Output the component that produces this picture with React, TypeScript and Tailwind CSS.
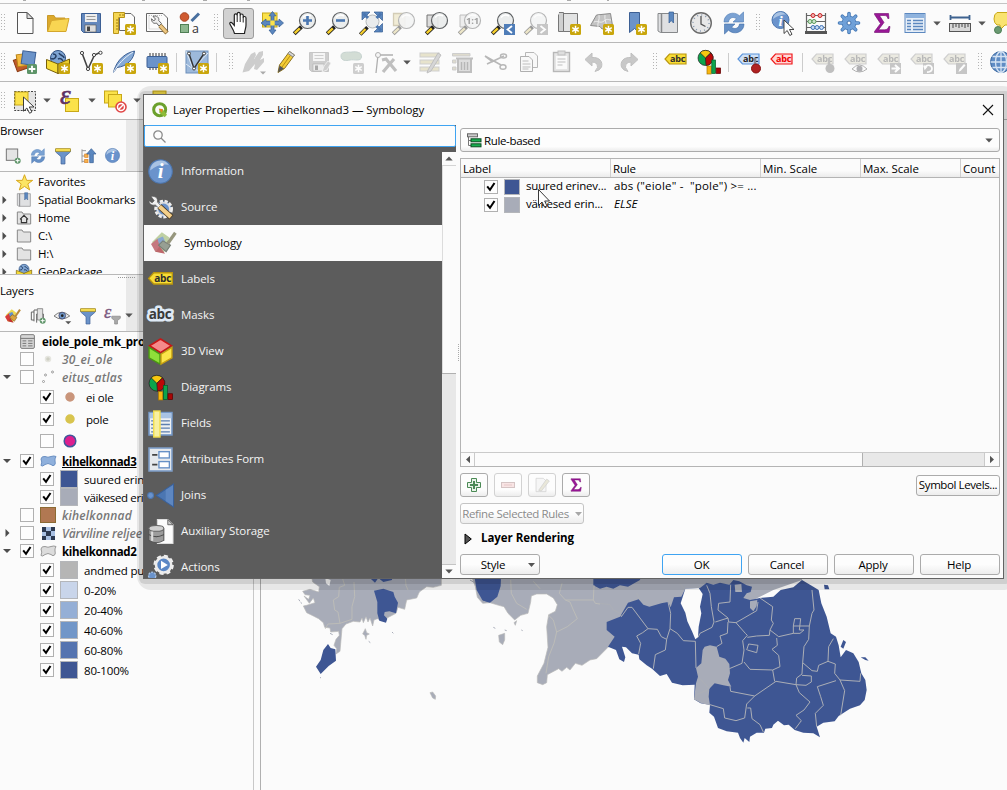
import React from "react";

type Kids = { children?: React.ReactNode };
type IconProps = Kids & { s?: number; dim?: boolean };

const Ic = ({ children, s = 24, dim }: IconProps) => (
  <svg width={s} height={s} viewBox="0 0 24 24" fill="none" className={dim ? "shrink-0 overflow-visible opacity-45 grayscale-[60%]" : "shrink-0 overflow-visible"}>
    {children}
  </svg>
);

const Cell = ({ children, on }: Kids & { on?: boolean }) => (
  <div className={on ? "flex h-[31px] w-[31px] mx-px shrink-0 items-center justify-center rounded-[3px] border border-[#9c9c9c] bg-[#d2d2d2]" : "flex w-[33px] shrink-0 items-center justify-center"}>
    {children}
  </div>
);

const Grip = () => (
  <svg width="6" height="18" viewBox="0 0 6 18" className="shrink-0">
    {[0, 3, 6, 9, 12, 15].map((y) => (
      <g key={y} fill="#b4b4b4">
        <rect x="0" y={y} width="1" height="1" />
        <rect x="3" y={y} width="1" height="1" />
      </g>
    ))}
  </svg>
);

const GripCell = () => (
  <div className="flex w-[16px] shrink-0 items-center justify-center pl-[2px]">
    <Grip />
  </div>
);

const Down = () => (
  <svg width="8" height="5" viewBox="0 0 8 5" className="shrink-0">
    <path d="M.3 .5H7.7L4 4.5Z" fill="#555" />
  </svg>
);

const DownCell = () => (
  <div className="flex w-[12px] shrink-0 items-center justify-center">
    <Down />
  </div>
);

const SepCell = () => (
  <div className="flex w-[7px] shrink-0 justify-center">
    <div className="h-[19px] w-px shrink-0 bg-[#cccccc]" />
  </div>
);

const Star = ({ gray }: { gray?: boolean }) => (
  <g>
    <rect x="13" y="13" width="11" height="11" rx="1.5" fill={gray ? "#999" : "#c9a60c"} />
    <path d="M18.5 14.700v7.600M15.200 16.600l6.600 3.800M21.800 16.600l-6.600 3.800" stroke="#fff" strokeWidth="1.500" />
    <circle cx="18.500" cy="18.500" r="1.800" fill="#fff" />
  </g>
);

const Lens = ({ children }: Kids) => (
  <g>
    <path d="M1.200 22.700L8.500 15.700" stroke="#222" strokeWidth="4" />
    <path d="M1.700 22.200L6.800 17.300" stroke="#f6cf2c" strokeWidth="2.400" />
    <circle cx="14.500" cy="9.500" r="8" fill="#e9ebec" fillOpacity=".92" stroke="#5e6163" strokeWidth="1.200" />
    <path d="M10 6.500A6 6 0 0 1 18 5" stroke="#fff" strokeWidth="1.600" />
    {children}
  </g>
);

const NewFile = () => (
  <Ic><path d="M4.500 1.500H14L20 7.500V22.500H4.500Z" fill="#fcfcfc" stroke="#555" /><path d="M14 1.500V7.500H20Z" fill="#ddd" stroke="#555" /></Ic>
);
const Folder = () => (
  <Ic>
    <path d="M1.500 20V4.500H8L9.500 7H19V20Z" fill="#dca92c" stroke="#c8992a" />
    <path d="M1.500 20.500L5.500 9.500L23 7.500L20 20.500Z" fill="#f8d552" stroke="#d4a62c" />
  </Ic>
);
const Floppy = ({ dim, s }: { dim?: boolean; s?: number }) => (
  <Ic dim={dim} s={s}>
    <path d="M2.500 2.500H21.500V21.500H4.500L2.500 19.500Z" fill={dim ? "#999" : "#6488bd"} stroke={dim ? "#888" : "#3c5f94"} />
    <rect x="6" y="3" width="12" height="8" fill="#eee" />
    <path d="M7.500 5.500h9M7.500 8.500h9" stroke="#999" />
    <rect x="6" y="14" width="11" height="7" fill="#ddd" stroke="#555" strokeWidth=".6" />
    <rect x="8" y="15.500" width="3" height="4.500" fill="#444" />
    {dim && <path d="M15 22L17 16L21 11L24 13L20 20Z" fill="#999" stroke="#eee" strokeWidth=".8" />}
  </Ic>
);
const NewLayout = () => (
  <Ic>
    <path d="M7.500 2.500H19L22.500 6V19.500H7.500Z" fill="#fcfcfc" stroke="#666" />
    <path d="M1.500 1.500H12.500V6.500H6.500V22.500H1.500Z" fill="#f5d653" stroke="#b9951a" />
    <path d="M4 9h2M4 12h2M4 15h2M4 18h2M8 3v2M11 3v2" stroke="#a07f10" />
    <Star />
  </Ic>
);
const LayoutMgr = () => (
  <Ic>
    <path d="M1.500 2.500H18L22.500 7V20.500H1.500Z" fill="#fcfcfc" stroke="#666" /><path d="M4 4.500h13M4 4.500V18h14" stroke="#bbb" strokeDasharray="1 1" />
    <path d="M8 5.500l2.500 2.500-1.700 2L6.500 7.700C6.500 12 9.500 13 11.500 12L14 15l2.500-2.500L13.700 9.500C14.500 6.500 11.500 4 8 5.500Z" fill="#eee" stroke="#666" />
    <path d="M15 14.500L22 22" stroke="#8a6a32" strokeWidth="4.500" /><path d="M15 14.500L21.500 21.500" stroke="#ecc680" strokeWidth="3" />
  </Ic>
);
const StyleMgr = () => (
  <Ic>
    <circle cx="6.500" cy="6" r="4.300" fill="#cf5a30" stroke="#a84422" /><path d="M13.500 10L21 2.500" stroke="#49709f" strokeWidth="3" />
    <rect x="2.500" y="13.500" width="8" height="8" fill="#8db78f" stroke="#4f7f55" />
    <text x="14" y="21.500" fontSize="12.500" fill="#333" fontFamily="Open Sans">a</text>
  </Ic>
);
const Hand = () => (
  <Ic>
    <path d="M7.500 22.500C6.500 18.500 4 15.500 2.800 12.800C2.500 11 4.500 10.800 5.500 12.500L7.300 14.500V4.300C7.300 2.400 10 2.400 10.200 4.300V2.800C10.500 .9 13 .9 13.200 2.800V4.300C13.500 2.500 16 2.600 16.200 4.500V6.500C16.600 5 19 5.200 19 7V14C19 18 17.500 19.500 17.500 22.500Z" fill="#fff" stroke="#222" strokeWidth="1.200" />
    <path d="M10.200 4V11M13.200 4V11M16.200 6V11.500" stroke="#222" />
  </Ic>
);
const PanSel = () => (
  <Ic>
    <rect x="2.500" y="2" width="14.500" height="14" fill="#fbe24a" stroke="#c8a818" />
    <path d="M12.500 .5L16 4.800H14V10H19V8L23.500 12L19 16V14H14V19H16L12.500 23.500L9 19H11V14H6V16L1 12L6 8V10H11V4.800H9Z" fill="#5b87bf" stroke="#345c92" strokeWidth=".7" /><rect x="10.300" y="9.500" width="4.400" height="5" fill="#fbe24a" />
  </Ic>
);
const ZoomIn = () => <Ic><Lens><path d="M14.500 5v9M10 9.500h9" stroke="#4a76b0" strokeWidth="2.600" /></Lens></Ic>;
const ZoomOut = () => <Ic><Lens><path d="M10 9.500h9" stroke="#4a76b0" strokeWidth="2.600" /></Lens></Ic>;
const ZoomFull = () => (
  <Ic>
    <path d="M3 1h8L3 9ZM15 1h8.500v8.500ZM23.500 12.500v8.500H15Z" fill="#5b87bf" stroke="#345c92" strokeWidth=".7" />
    <path d="M1.200 23.500L8.500 16.200" stroke="#222" strokeWidth="3.600" /><path d="M1.500 23.200L6.500 18" stroke="#f6cf2c" strokeWidth="2.200" />
    <circle cx="13.500" cy="10.500" r="6.500" fill="#e9ebec" stroke="#b5b8ba" /><path d="M4.500 2.500l4.500 4.500M22 2.500l-4.500 4.500M22 19.500l-4.500-4.500" stroke="#4a76b0" strokeWidth="3" />
  </Ic>
);
const ZoomSel = () => <Ic dim><path d="M1.500 2.500H13V14.500H1.500Z" fill="#f6df60" stroke="#b9951a" strokeWidth="1.300" /><Lens /></Ic>;
const ZoomLayer = () => <Ic><path d="M2 4H13V16H2Z" fill="#ddd" stroke="#777" /><Lens /></Ic>;
const ZoomNative = () => (
  <Ic dim><path d="M2 4H13V16H2Z" fill="#ddd" stroke="#777" /><Lens><text x="14.500" y="13" fontSize="9.500" fontWeight="700" textAnchor="middle" fill="#333" fontFamily="Open Sans">1:1</text></Lens></Ic>
);
const ZoomLast = () => <Ic><Lens /><rect x="13" y="13" width="11" height="11" fill="#4f7db8" /><path d="M21 15l-4.500 3.500L21 22" stroke="#fff" strokeWidth="1.800" /></Ic>;
const ZoomNext = () => <Ic dim><Lens /><rect x="13" y="13" width="11" height="11" fill="#888" /><path d="M16.500 15l4.500 3.500-4.500 3.500" stroke="#fff" strokeWidth="1.800" /></Ic>;
const MapView = () => (
  <Ic><path d="M4.500 2.500H20.500V20.500H4.500Z" fill="#e2e3e3" stroke="#777" /><path d="M2 1.500H6.500V20.500H1.500V3.500" fill="#cfd0d0" stroke="#777" /><Star /></Ic>
);
const View3D = () => (
  <Ic><path d="M.5 14.500L6.500 4L20.500 2.500L22.500 14.500L12 18L10 15.500Z" fill="#c3c3c3" stroke="#8c8c8c" /><path d="M4 11c4-2 6 2 10-1s4-1 7-1M9 4c1 5-2 8-1 12M15 4c-1 5 2 7 1 12" stroke="#eee" /><Star /></Ic>
);
const Bookmark = () => <Ic><path d="M6.500 1.500H16.500V21.500L11.500 17.500L6.500 21.500Z" fill="#6b93c9" stroke="#3c5f94" /><Star /></Ic>;
const Book = ({ s }: { s?: number }) => (
  <Ic s={s}><path d="M2 2.500H21.500V21.500H4.500L2 20Z" fill="#dfe0e2" stroke="#86888a" /><path d="M5.500 2.500v19" stroke="#86888a" strokeWidth="1.500" /><path d="M13 1H17.500V12L15.200 9.500L13 12Z" fill="#5b87bf" stroke="#345c92" strokeWidth=".7" /></Ic>
);
const Clock = () => (
  <Ic><circle cx="12" cy="12" r="10.300" fill="#e8e8e8" stroke="#6b6b6b" strokeWidth="1.400" /><circle cx="12" cy="12" r="8" stroke="#8a9bb0" strokeWidth="1.500" strokeDasharray="1 3.190" /><path d="M12 5v8l4.500 2.500" stroke="#555" strokeWidth="1.300" /></Ic>
);
const Refresh = ({ s }: { s?: number }) => (
  <Ic s={s}><path d="M2 11C2 2.500 12 -.5 17.500 4.800L21.500 1V11H11L14.500 7.800C11 5 7 7 6.500 11Z" fill="#7ba2d3" stroke="#4a78b4" strokeWidth=".6" /><path d="M22 13C22 21.500 12 24.500 6.500 19.200L2.500 23V13H13L9.500 16.200C13 19 17 17 17.500 13Z" fill="#6690c6" stroke="#3d6ba8" strokeWidth=".6" /></Ic>
);
const Cursor = ({ x, y, k = 1 }: { x: number; y: number; k?: number }) => (
  <path transform={`translate(${x} ${y}) scale(${k})`} d="M0 0V13.500L3.200 10.500L5.800 15.500L8 14.300L5.500 9.500H10Z" fill="#fff" stroke="#333" strokeWidth=".9" />
);
const Info = ({ s, cursor }: { s?: number; cursor?: boolean }) => (
  <Ic s={s}>
    <circle cx={cursor ? 9.5 : 12} cy={cursor ? 9 : 12} r={cursor ? 8.5 : 11.3} fill="#6a93cc" stroke="#4d77b0" />
    <path d={cursor ? "M2 8A7.500 7.500 0 0 1 15 3.500Q9 3 2 8" : "M2 11A10 10 0 0 1 20 5.500Q10 4 2 11"} fill="#a9c3e3" />
    <text x={cursor ? 9.5 : 12} y={cursor ? 14.5 : 18.5} textAnchor="middle" fontSize={cursor ? 15 : 20} fontWeight="700" fontStyle="italic" fill="#fff" fontFamily="Liberation Serif">i</text>
    {cursor && <Cursor x={13} y={9} k={1} />}
  </Ic>
);
const Abacus = () => (
  <Ic>
    <path d="M2.500 2V21M21.500 2V21M2.500 4.500H21.500M2.500 10.500H21.500M2.500 16.500H21.500" stroke="#666" strokeWidth="1.200" /><path d="M1 21.500H23" stroke="#555" strokeWidth="3" />
    {[9, 16].map((x) => <circle key={x} cx={x} cy="4.500" r="2" fill="#f0b0b0" stroke="#c22" />)}
    {[6, 10].map((x) => <circle key={x} cx={x} cy="10.500" r="2" fill="#cfe6cf" stroke="#5a9a5a" />)}
    {[9, 13, 17.500].map((x) => <circle key={x} cx={x} cy="16.500" r="2" fill="#c8dcf4" stroke="#3f72b5" />)}
  </Ic>
);
const Gear = () => (
  <Ic>
    <g stroke="#4a7cb8" strokeWidth="3.600" strokeLinecap="round">{[0, 45, 90, 135].map((a) => <path key={a} d="M12 2.500V21.500" transform={`rotate(${a} 12 12)`} />)}</g>
    <circle cx="12" cy="12" r="7" fill="#6fa0d8" stroke="#4a7cb8" />
    <g stroke="#6fa0d8" strokeWidth="2" strokeLinecap="round">{[0, 45, 90, 135].map((a) => <path key={a} d="M12 2.700V21.300" transform={`rotate(${a} 12 12)`} />)}</g>
    <circle cx="12" cy="12" r="2" fill="#fff" stroke="#3f6fab" />
  </Ic>
);
const Sigma = ({ s }: { s?: number }) => (
  <Ic s={s}><path d="M4.500 2.500H18.500L19 7.500H17.800C17.500 5 16 4.500 14 4.500H9.500L14 11.500L8.500 18.800H14.500C17 18.800 18.200 17.500 18.800 15.500H20L19 21.500H4.500V20.500L10.500 12.500L4.500 3.500Z" fill="#9a1797" stroke="#6d0b6d" strokeWidth=".6" /></Ic>
);
const Table = () => (
  <Ic><rect x="2" y="2.500" width="20" height="19" fill="#e7eff8" stroke="#5c88bf" /><rect x="2.500" y="3" width="19" height="4" fill="#8fb3de" /><path d="M4 9.500h4M10 9.500h10M4 12.500h4M10 12.500h10M4 15.500h4M10 15.500h10M4 18.500h4M10 18.500h10" stroke="#5c88bf" strokeWidth="1.400" /></Ic>
);
const Ruler = () => (
  <Ic><path d="M2.500 6.500H21.500M2.500 4v5M21.500 4v5" stroke="#3e6390" strokeWidth="1.800" /><rect x="1.500" y="12.500" width="21" height="8" fill="#d8d8d8" stroke="#555" /><path d="M5 13v4M8 13v3M11 13v4M14 13v3M17 13v4M20 13v3" stroke="#444" /></Ic>
);
const Tip = () => (
  <Ic><path d="M4 1.500H22V14H12L7 19V14H4Q1 12 1 8Q1 3 4 1.500Z" fill="#f9e370" stroke="#c8a818" /><circle cx="5" cy="19" r="3.500" fill="#6a9a72" stroke="#4f7f55" /></Ic>
);

const DataSource = () => (
  <Ic><rect x="2" y="8" width="12" height="12" transform="rotate(-20 8 14)" fill="#bf5a2a" stroke="#8c3d16" /><rect x="4" y="4" width="12" height="12" transform="rotate(-8 10 10)" fill="#f4b93f" stroke="#b98415" /><rect x="9" y="1.500" width="13" height="13" transform="rotate(8 15 8)" fill="#6b93c9" stroke="#3c5f94" /><rect x="14" y="14" width="10" height="10" rx="1.500" fill="#5d9468" /><path d="M19 15.700v6.600M15.700 19h6.600" stroke="#fff" strokeWidth="1.800" /></Ic>
);
const GeoPkg = ({ s, plain }: { s?: number; plain?: boolean }) => (
  <Ic s={s}>
    <circle cx="12" cy="8" r="7.500" fill="#7ea4d2" stroke="#2f4f7f" /><path d="M7 4c3 0 4 2 2 4s-3 0-4 1M13 3c1 3 5 2 5 5M12 9c2-1 4 0 5 2" stroke="#263f63" strokeWidth="1.500" />
    <path d="M.5 9.500L12 14V23.500L.5 18.500Z" fill="#f6dc38" stroke="#775f08" /><path d="M23.500 9L12 14V23.500L23.500 18.500Z" fill="#e9cb2c" stroke="#775f08" />
    {!plain && <Star />}
  </Ic>
);
const VNew = () => (
  <Ic><path d="M3 3L9 19L15.500 5L21 2.500" stroke="#444" strokeWidth="1.600" /><g fill="#fff" stroke="#444"><circle cx="3" cy="3" r="1.600" /><circle cx="9" cy="19" r="1.600" /><circle cx="15" cy="5" r="1.600" /><circle cx="21.500" cy="2.800" r="1.600" /></g><Star /></Ic>
);
const Feather = () => (
  <Ic><path d="M1.500 22.500C3 15 9 4 22.500 1C22 9 15 16.500 5 17.500Z" fill="#86aad6" stroke="#3c5f94" /><path d="M1.500 22.500C6 14 12 8 21 2" stroke="#e8f0fa" /><Star /></Ic>
);
const Chip = () => (
  <Ic><path d="M5 3v17M8 3v17M11 3v17M14 3v17M17 3v17M20 3v17" stroke="#555" strokeWidth="1.200" /><rect x="2" y="6.500" width="20" height="11" rx="1" fill="#6b93c9" stroke="#3c5f94" /><Star /></Ic>
);
const VMesh = () => (
  <Ic><rect x="1" y="1" width="22" height="22" fill="#9db9db" stroke="#6d8fbb" /><path d="M1 1L8 19L23 3M8 19L23 23M1 14L8 19" stroke="#dde8f4" strokeWidth="1" /><path d="M4 3.500L9 18.500L19 3.500" stroke="#333" strokeWidth="1.400" /><g fill="#fff" stroke="#444"><circle cx="4" cy="3.500" r="1.500" /><circle cx="9" cy="18.500" r="1.500" /><circle cx="19" cy="3.500" r="1.500" /></g><Star /></Ic>
);
const Edits = () => (
  <Ic><path d="M1.500 22.500L4 14L10 4L14 2L15 5L13 9L18 2L22 1V5L19 10L23 8V12L16 20L13 19L14 14L8 21Z" fill="#cdcdcd" /><path d="M19 21.500H25L22 24.500Z" fill="#aaa" /></Ic>
);
const Pencil = () => (
  <Ic><path d="M4 22.500L5.500 15L15.500 1.500L20.500 5L10.500 18.500Z" fill="#f4cc35" stroke="#8f7421" /><path d="M8 17L18 3.200" stroke="#b78f12" /><path d="M14 3.500L15.500 1.500L20.500 5L19 7Z" fill="#d8d8d8" stroke="#888" /><path d="M4 22.500L5.500 15.500L10 18.500Z" fill="#555" /></Ic>
);
const AddFeat = () => <Ic dim><path d="M1 6C1 1 8 2.500 12 2S22 2 21.500 7S14 9 10 10S1 11 1 6Z" fill="#8cc29a" stroke="#6a9" /><Star gray /></Ic>;
const Vertex = () => (
  <Ic dim><path d="M3 23L5 5H20" stroke="#555" strokeWidth="1.300" /><circle cx="5" cy="5" r="2.500" fill="#eee" stroke="#555" /><path d="M9 10l4-1 10 12M21 9L10 22" stroke="#777" strokeWidth="3.200" /></Ic>
);
const EditAttr = () => <Ic dim><g fill="#e3c94c" stroke="#999"><rect x="2" y="3" width="19" height="4" /><rect x="2" y="10" width="19" height="4" /><rect x="2" y="17" width="19" height="4" /></g><path d="M10 20L20 3L23 5L13 21L9 23Z" fill="#aaa" stroke="#777" /></Ic>;
const Trash = () => <Ic dim><path d="M1.500 3.500H19V6H1.500ZM1.500 10H5V13H1.500ZM1.500 17H5V20H1.500Z" fill="#c9b76a" stroke="#999" /><path d="M5 8.500H22M7 9V22H20V9" fill="#bbb" stroke="#777" strokeWidth="2" /><path d="M10.500 12v8M13.500 12v8M16.500 12v8" stroke="#666" strokeWidth="1.400" /></Ic>;
const Cut = () => <Ic dim><path d="M1 6L17 15M3 14L20 6M1 6L9 12" stroke="#666" strokeWidth="1.600" /><ellipse cx="19" cy="17" rx="3" ry="2.300" stroke="#666" strokeWidth="1.500" /><ellipse cx="19.500" cy="6" rx="3" ry="2" stroke="#666" strokeWidth="1.500" /></Ic>;
const Copy = () => <Ic dim><path d="M8.500 2.500H17L20.500 6V17.500H8.500Z" fill="#f6f6f6" stroke="#666" /><path d="M3.500 6.500H12L15.500 10V21.500H3.500Z" fill="#f6f6f6" stroke="#555" /><path d="M5.500 11h6M5.500 14h8M5.500 17h8M5.500 19h6" stroke="#777" /></Ic>;
const Paste = () => <Ic dim><rect x="3.500" y="2.500" width="16" height="19" fill="#ccc" stroke="#666" strokeWidth="1.400" /><rect x="6" y="6" width="11" height="13" fill="#fafafa" /><rect x="8" y="1" width="7" height="4" fill="#bbb" stroke="#777" /><path d="M7.500 9h8M7.500 12h8M7.500 15h5" stroke="#777" /></Ic>;
const Undo = () => <Ic dim><path d="M2 9.500L9 3V7.500C17 7 20 12 18.500 17Q17 20.500 12 21.500Q16 17 14 14Q12 12 9 12V16Z" fill="#8c8c8c" stroke="#777" /></Ic>;
const Redo = () => <Ic dim><path d="M22 9.500L15 3V7.500C7 7 4 12 5.500 17Q7 20.500 12 21.500Q8 17 10 14Q12 12 15 12V16Z" fill="#8c8c8c" stroke="#777" /></Ic>;

const Tag = ({ fill, stroke, ink, label = "abc" }: { fill: string; stroke: string; ink: string; label?: string }) => (
  <g><path d="M6 5.500H22.500V15.500H6L1.500 10.500Z" fill={fill} stroke={stroke} strokeWidth="1.200" /><text x="14" y="13.700" textAnchor="middle" fontSize="9" fontWeight="700" fill={ink} fontFamily="Open Sans" letterSpacing="-.2">{label}</text></g>
);
const LabelY = () => <Ic><g transform="translate(-.5 -1.500)"><Tag fill="#f8dd35" stroke="#b9960f" ink="#2d2d2d" /></g></Ic>;
const LabelNav = () => <Ic s={27}><g transform="translate(0 .5)"><Tag fill="#f8dd35" stroke="#b9960f" ink="#2d2d2d" /></g></Ic>;
const Diagram = ({ s }: { s?: number }) => (
  <Ic s={s}>
    <circle cx="8.500" cy="8" r="7.500" fill="#0da44c" stroke="#222" strokeWidth=".7" /><path d="M8.500 8L3 2.700A7.500 7.500 0 0 1 14 2.700Z" fill="#f9c80f" stroke="#222" strokeWidth=".7" /><path d="M8.500 8L14 2.700A7.500 7.500 0 0 1 9 15.500Z" fill="#bb0808" stroke="#222" strokeWidth=".7" />
    <rect x="10" y="16" width="4.200" height="8" fill="#f9b60f" stroke="#a87805" strokeWidth=".7" /><rect x="14.800" y="10" width="3.800" height="13.500" fill="#0da44c" stroke="#065c29" strokeWidth=".7" /><rect x="19.200" y="18" width="4.400" height="5.500" fill="#a80606" stroke="#5d0202" strokeWidth=".7" />
  </Ic>
);
const LabelPin = () => <Ic><g transform="translate(-.5 -1.500)"><Tag fill="#cfe1f7" stroke="#5b94da" ink="#222" /></g><path d="M18 8v8" stroke="#889" strokeWidth="2.500" /><circle cx="19" cy="18.500" r="4.500" fill="#b02121" stroke="#811" /></Ic>;
const LabelRed = () => <Ic><g transform="translate(-.5 -1.500)"><Tag fill="#ffd6d6" stroke="#f01818" ink="#e00" /></g></Ic>;
const LabelDim = ({ k }: { k: number }) => (
  <Ic dim>
    <g transform="translate(-.5 -1.500)"><Tag fill="#ddd7a8" stroke="#999" ink="#666" /></g>
    {k === 0 && <g><path d="M18 8v8" stroke="#777" strokeWidth="2.500" /><circle cx="19" cy="18.500" r="4.500" fill="#777" /></g>}
    {k === 1 && <g><path d="M8 19Q15.500 11 23 19Q15.500 25 8 19Z" fill="#fff" stroke="#555" /><circle cx="15.500" cy="18.700" r="3" fill="#556" /></g>}
    {k > 1 && <rect x="13" y="13" width="11" height="11" fill="#888" />}
    {k === 2 && <path d="M14.500 18.500H21M18 15l4 3.500-4 3.500" stroke="#fff" strokeWidth="2" />}
    {k === 3 && <path d="M15 18c0-4 7-3.500 7 .5S17 22 17 22M17 16l-2 2.500-1-3" stroke="#fff" strokeWidth="1.700" />}
    {k === 4 && <path d="M15.500 22l1-3 4.500-5 1.500 1.500-4.500 5Z" fill="#fff" />}
  </Ic>
);
const Globe = () => <Ic><circle cx="12" cy="12" r="10.500" fill="#5f8cc4" stroke="#3a679f" /><path d="M12 1.500v21M1.500 12h21M3.500 6.500h17M3.500 17.500h17" stroke="#d5e3f3" strokeWidth="1.300" /><ellipse cx="12" cy="12" rx="5.500" ry="10.500" stroke="#d5e3f3" strokeWidth="1.300" /></Ic>;

const SelectIc = () => <Ic><rect x="1.500" y="2.500" width="21" height="19" stroke="#444" fill="#e4e4e4" strokeDasharray="2 1.300" /><rect x="2" y="3" width="13" height="13" fill="#fbe24a" stroke="#c8a818" /><g transform="translate(10.500 8)"><Cursor x={0} y={0} k={1.05} /></g></Ic>;
const SelExpr = () => <Ic><rect x="7.500" y="9.500" width="13" height="13" fill="#fbe24a" stroke="#c8a818" /><text x="2" y="14.500" fontSize="27" fontStyle="italic" fill="#5e3163" stroke="#5e3163" strokeWidth=".6" fontFamily="Liberation Serif">ε</text></Ic>;
const Desel = () => <Ic><rect x="1.500" y="2" width="13" height="12" fill="#fbe24a" stroke="#c8a818" /><rect x="5.500" y="5.500" width="13" height="12.500" fill="#fbe24a" stroke="#c8a818" /><circle cx="18" cy="18" r="5.800" fill="#e04444" /><circle cx="18" cy="18" r="3.500" stroke="#fff" strokeWidth="1.500" /><path d="M15.500 20.500l5-5" stroke="#fff" strokeWidth="1.500" /></Ic>;

const AddLayer = () => <Ic s={16}><rect x="2" y="1.500" width="17" height="17" fill="#e4e4e4" stroke="#777" strokeWidth="1.500" /><circle cx="19" cy="19" r="4.500" fill="#5d9468" /><path d="M19 16v6M16 19h6" stroke="#fff" strokeWidth="1.500" /></Ic>;
const Filter = () => <Ic s={16}><path d="M1 2H23V6L15 13V24H9V13L1 6Z" fill="#6b93c9" stroke="#3c5f94" /><rect x="1" y="1" width="22" height="4" fill="#f2da50" stroke="#a98d18" /></Ic>;
const Collapse = () => <Ic s={16}><path d="M3 2v20M3 4h6M3 12h4M3 20h4" stroke="#999" strokeWidth="1.500" /><rect x="7" y="9" width="5" height="5" fill="#f7b24c" stroke="#d9822b" /><rect x="7" y="17" width="5" height="5" fill="#f7b24c" stroke="#d9822b" /><path d="M17 1L24 9H20V22H14.500V9H10Z" fill="#5b87bf" stroke="#345c92" /></Ic>;
const Brush = ({ s = 16, dim }: { s?: number; dim?: boolean }) => (
  <svg width={s} height={s} viewBox="0 0 24 24" className={dim ? "shrink-0 opacity-90" : "shrink-0"}>
    <path d="M1 11L10 2L17 7L12 21L4 20Z" fill={dim ? "#b9cc9a" : "#ecd850"} />
    <path d="M0 13L6 8L9 15L4 20Z" fill={dim ? "#c06a72" : "#d83c3c"} />
    <path d="M6 8L11 6L14 13L8 15Z" fill={dim ? "#7d9fcb" : "#5e8fd0"} />
    <path d="M4 20L8 15L13 22Z" fill={dim ? "#b8565c" : "#c03030"} />
    <path d="M7 14L11 10L18 14L14 20Z" fill={dim ? "#8d9688" : "#d9a23c"} stroke={dim ? "#6a7268" : "#8b6a2c"} />
    <path d="M15.500 12.500L22.500 2.500" stroke={dim ? "#8c8c70" : "#b98a3a"} strokeWidth="3" />
  </svg>
);
const AddGroup = () => <Ic s={16}><path d="M6 18H2V6H6M6 20V3H12M10 22V9H20V18" stroke="#666" strokeWidth="1.500" /><path d="M11 1v17h8V1Z" fill="#e0e0e0" stroke="#666" /><circle cx="19" cy="19" r="4.500" fill="#5d9468" /><path d="M19 16v6M16 19h6" stroke="#fff" strokeWidth="1.500" /></Ic>;
const Eye = () => <Ic s={18}><path d="M0 12Q10 2 21 12Q10 20 0 12Z" fill="#f0f0f0" stroke="#777" strokeWidth="1.300" /><circle cx="11" cy="11.500" r="4.500" fill="#6f97c8" stroke="#446" /><circle cx="11" cy="11.500" r="1.800" fill="#222" /><path d="M15 19h8l-4 4Z" fill="#555" /></Ic>;
const EpsF = () => <Ic s={17}><text x="0" y="15" fontSize="26" fontStyle="italic" fill="#7c5980" stroke="#7c5980" strokeWidth=".5" fontFamily="Liberation Serif">ε</text><path d="M11 13H23V16L19 19V24H15V19L11 16Z" fill="#aaa" stroke="#888" /></Ic>;

const Check = ({ on = true }: { on?: boolean }) => (
  <svg width="14" height="14" viewBox="0 0 14 14" className="shrink-0">
    <rect x=".5" y=".5" width="13" height="13" fill="#fdfdfd" stroke="#b0b0b0" />
    {on && <path d="M3.200 6.300L6 9.800L10.500 3" stroke="#000" strokeWidth="2" fill="none" />}
  </svg>
);
const Tri = ({ open }: { open?: boolean }) => (
  <svg width="8" height="8" viewBox="0 0 8 8" className="shrink-0">
    <path d={open ? "M0 2H8L4 6Z" : "M2.500 0V8L6.500 4Z"} fill="#4d4d4d" />
  </svg>
);

const FolderG = ({ home }: { home?: boolean }) => (
  <Ic s={16}><path d="M2 21V3H9L11 6H22V21Z" fill="#e3e3e3" stroke="#888" strokeWidth="1.500" />{home && <path d="M6 14L12 8L18 14M8 13V19H16V13" stroke="#333" strokeWidth="1.700" />}</Ic>
);

const browserRows: [string, React.ReactNode, boolean][] = [
  ["Favorites", <Ic s={17}><path d="M12 1L15 9H23.500L16.700 14L19.300 22.500L12 17.500L4.700 22.500L7.300 14L.5 9H9Z" fill="#fbe564" stroke="#d8a81c" strokeWidth="1.400" /></Ic>, false],
  ["Spatial Bookmarks", <Book s={16} />, true],
  ["Home", <FolderG home />, true],
  ["C:\\", <FolderG />, true],
  ["H:\\", <FolderG />, true],
  ["GeoPackage", <GeoPkg s={16} plain />, true],
];

const Swatch = ({ c }: { c: string }) => (
  <svg width="18" height="18" className="shrink-0"><rect x=".5" y=".5" width="17" height="17" fill={c} stroke="#b4b6ba" /></svg>
);

const Poly = ({ c, k }: { c: string; k: string }) => (
  <svg width="17" height="13" viewBox="0 0 17 13" className="shrink-0"><path d="M1 4Q1.500 1 5 1.500Q8 3 11 1.500Q14 .5 16 1.500Q14.500 4 15 6T15 9.500Q13 12 11 9.500Q8 7.500 5 9.500Q2.500 12 1 10.500Q2.500 7 1 4Z" fill={c} stroke={k} /></svg>
);

const Group = ({ open, checked, icon, label, cls, has = true }: { open?: boolean; checked: boolean; icon: React.ReactNode; label: string; cls: string; has?: boolean }) => (
  <div className="flex h-[18px] shrink-0 items-center pl-[3px]">
    <div className="w-[17px] shrink-0">{has && <Tri open={open} />}</div>
    <Check on={checked} />
    <div className="flex w-[28px] shrink-0 items-center justify-center">{icon}</div>
    <span className={"whitespace-nowrap pt-px " + cls}>{label}</span>
  </div>
);

const dimName = "font-semibold italic text-[12px] text-[#777] tracking-[0.2px]";
const boldName = "font-bold tracking-[-0.35px]";

const Dot = ({ c, k, r }: { c: string; k: string; r: number }) => (
  <svg width="16" height="16" className="shrink-0"><circle cx="8" cy="8" r={r} fill={c} stroke={k} strokeWidth="1.500" /></svg>
);

const classes: [string, string][] = [
  ["andmed pu", "#b5b5b5"], ["0-20%", "#c9d5ea"], ["20-40%", "#95afd6"], ["40-60%", "#7196c8"], ["60-80%", "#5574b0"], ["80-100%", "#3e5693"],
];

const LayerTree = () => (
  <div className="flex w-[150px] flex-1 flex-col">
    <div className="flex h-[18px] items-center pl-[20px]">
      <Ic s={15}><rect x="1" y="1" width="22" height="22" rx="2" fill="#d6d6d6" stroke="#777" strokeWidth="1.500" /><path d="M1 7h22M4 11h6M13 11h7M4 15h6M13 15h7M4 19h6M13 19h7" stroke="#777" strokeWidth="1.600" /></Ic>
      <span className="ml-[7px] pt-[2px] font-bold tracking-[-0.1px]">eiole_pole_mk_pro</span>
    </div>
    <Group has={false} checked={false} icon={<Dot c="#cfd0c4" k="#e6e6e0" r={2.500} />} label="30_ei_ole" cls={dimName} />
    <Group open checked={false} icon={<svg width="14" height="14" fill="#fff" stroke="#999"><circle cx="2.500" cy="11.500" r="1" /><circle cx="4.500" cy="5" r="1" /><circle cx="11.500" cy="2" r="1" /></svg>} label="eitus_atlas" cls={dimName} />
    <div className="flex h-[22px] items-center pl-[40px]"><Check /><div className="ml-[8px] mr-[8px]"><Dot c="#c9957b" k="#c9957b" r={4} /></div><span className="pt-px">ei ole</span></div>
    <div className="flex h-[22px] items-center pl-[40px]"><Check /><div className="ml-[8px] mr-[8px]"><Dot c="#d8c44e" k="#d8c44e" r={4} /></div><span className="pt-px">pole</span></div>
    <div className="flex h-[22px] items-center pl-[40px]"><Check on={false} /><div className="ml-[8px]"><Dot c="#dd1f8f" k="#41569a" r={5.800} /></div></div>
    <Group open checked icon={<Poly c="#8fb0dc" k="#6a8fc2" />} label="kihelkonnad3" cls="font-bold tracking-[-0.35px] underline" />
    <div className="flex h-[18px] items-center pl-[40px]"><Check /><div className="ml-[6px] mr-[6px]"><Swatch c="#3e5693" /></div><span className="whitespace-nowrap pt-px">suured erin</span></div>
    <div className="flex h-[18px] items-center pl-[40px]"><Check /><div className="ml-[6px] mr-[6px]"><Swatch c="#a8acb8" /></div><span className="whitespace-nowrap pt-px tracking-[-0.35px]">väikesed eri</span></div>
    <Group has={false} checked={false} icon={<svg width="16" height="16"><rect x=".5" y=".5" width="15" height="15" fill="#b17852" stroke="#8c6a33" /></svg>} label="kihelkonnad" cls={dimName} />
    <Group checked={false} icon={<svg width="13" height="13"><rect width="13" height="13" fill="#a9c1e4" /><path d="M0 0h4v5H0ZM9 0h4v4H9ZM4 4h5v5H4ZM0 9h4v4H0ZM9 9h4v4H9Z" fill="#2c3a52" /></svg>} label="Värviline reljee" cls="font-semibold italic text-[12px] text-[#777] tracking-[-0.1px]" />
    <Group open checked icon={<Poly c="#dcdcdc" k="#999" />} label="kihelkonnad2" cls={boldName} />
    {classes.map(([t, c]) => (
      <div key={t} className="flex h-[20px] items-center pl-[40px]"><Check /><div className="ml-[6px] mr-[6px]"><Swatch c={c} /></div><span className="whitespace-nowrap pt-px">{t}</span></div>
    ))}
  </div>
);

const MapCanvas = () => (
  <svg width="746" height="230" viewBox="261 560 746 230" className="block">
    <g transform="translate(260 570) scale(.33333)">
      <g fill="#a8acb8" stroke="#b9b9b8" strokeWidth="2">
        <path d="M150 0L158 36L178 50L176 66L150 58L128 64L135 74L150 76L146 88L132 78L148 100L160 84L165 98L140 106L130 108L140 128L160 138L176 146L190 158L194 172L210 174L212 186L236 184L238 196L228 208L222 226L230 236L228 252L240 244L246 176L258 162L280 154L300 156L306 144L310 158L318 140L324 156L330 144L338 168L342 150L352 146L366 152L408 130L414 112L434 118L440 90L470 84L478 66L500 50L520 52L544 46V0Z" />
        <path d="M308 192L316 176L320 188L328 192L320 196L318 208L314 196ZM716 196L734 190L734 210L728 224L718 216ZM762 158L770 152L766 166ZM510 368L518 366L527 378L526 388L518 384Z" />
        <path d="M628 0L646 50L652 82L668 100L690 98L716 106L732 110L744 130L764 150L782 136L804 130L812 96L814 78L830 72L860 72L880 84L892 104L886 124L866 134L860 170L864 232L852 280L832 318L832 338L848 344L860 338L862 314L896 296L906 304L920 292L930 300L946 280L966 286L990 270L1010 266L1044 232L1100 200L1140 180V0Z" />
      </g>
      <path d="M196 24L198 40L208 48L212 30ZM812 78L814 130" fill="#fbfbfb" />
      <g fill="#3e5693">
        <path d="M342 62L370 56L400 66L404 80L414 98L408 130L388 124L374 126L372 136L382 146L378 158L358 152L352 130L352 96ZM204 222L212 234L226 238L228 272L206 288L182 312L168 290L182 270L190 240ZM640 0H724L722 48L712 80L690 98L668 92L650 60ZM330 0H400L396 30L370 36L355 24L345 38L332 26Z" />
        <path d="M1000 0H1140V56L1110 54L1090 50L1070 58L1040 52L1020 56L1000 46Z" />
      </g>
      <g fill="none" stroke="#bcbcb8" strokeWidth="3">
        <path d="M246 20L254 46L238 52L236 80L220 90L224 120L234 126L240 160L276 148L276 110L284 80L282 36M240 160L204 162L196 176M436 24L438 46L444 60M752 30L754 70L770 100L800 118M820 34L840 56M906 40L898 70L916 90L930 96L940 120L952 146L922 170L890 186L882 220L866 260L858 310M916 90L1000 90L1002 46M1000 90L1006 100L1060 108L1082 136M866 136L880 150L890 186" />
      </g>
      <path d="M116 88l4 6M122 98l4 2M210 190l8 4M326 214l5 4M396 186l4 4M700 172l6 3M734 180l6 2M784 180l4 2M630 30l14 8M664 92l12 4M500 36l40 6M180 322l3 2" stroke="#a8acb8" strokeWidth="3" />
    </g>
    <g transform="translate(600 570) scale(.33333)">
      <path d="M0 0H610L606 30L520 60L460 90L330 100L250 110L60 140L20 190L0 250Z" fill="#a8acb8" />
      <path d="M128 0L120 30L84 50L60 46L40 56L20 50L0 56V0Z" fill="#3e5693" />
      <path d="M84 98L116 88L130 104L148 110L184 100L204 96L212 112L222 82L244 80L256 56L300 54L320 38L340 44L360 38L388 44L400 30L418 34L440 46L456 50L452 66L440 70L430 84L450 90L480 84L520 80L542 60L580 52L606 30L640 50L656 60L664 100L680 140L692 190L708 200L716 226L722 262L738 240L760 250L776 276L784 310L796 330L800 360L794 390L780 406L750 416L716 438L704 454L670 458L650 470L660 502L640 490L610 488L584 480L566 464L552 466L534 452L520 464L516 474L496 476L492 488L470 488L450 500L448 516L434 504L430 518L420 504L414 488L380 484L354 474L342 440L328 428L330 404L302 400L282 388L284 344L248 346L216 338L200 312L180 318L156 296L140 286L118 268L116 254L96 250L78 232L66 230L76 262L72 276L58 268L48 240L24 230L44 200L20 180L20 156L60 140ZM672 44L684 46L688 58L674 58ZM730 210L738 216L730 236L722 230ZM782 262L796 262L806 272L796 270ZM762 238l6 3ZM816 286l4 4Z" fill="#3e5693" />
      <path d="M308 240L314 230L330 226L350 230L358 260L376 266L388 282L390 310L384 330L394 350L370 346L344 340L328 356L326 380L330 406L304 400L282 388L288 340L294 320L288 294L304 280ZM450 94L472 90L470 108L460 124L450 114ZM404 44L424 42L426 66L406 66Z" fill="#a8acb8" />
      <path d="M256 56L296 54L308 72L300 110L304 130L296 170L294 202L286 208L276 184L262 154L256 128L242 100Z" fill="#fbfbfb" />
      <g fill="none" stroke="#acafb6" strokeWidth="3">
        <path d="M0 100L30 104L40 120L60 130L64 140L84 112L96 112L144 176L128 188L110 198L122 220L116 252M144 176L172 178L184 200L200 208L196 240L166 254L160 296M204 96L212 130L210 176L232 190L250 212L286 214L288 294M210 176L200 208M320 46L330 70L334 110L342 156L336 172L300 190L294 202M392 44L390 96L356 100L354 120L384 144L346 156M384 144L386 156L408 158L436 190L442 196L428 212L432 240L426 280L388 296M408 158L470 122L474 96M384 156L382 190L360 198L366 220L350 230M480 84L518 110L514 150L520 160L510 180L508 196L470 198L442 202M510 180L536 200L580 190L580 168L628 168L636 130L642 120L636 60M580 190L600 190L612 180L598 180L602 146L584 146L580 168M628 168L626 208L612 230L608 278L606 312L590 324L588 344L528 334L464 378L392 364L390 350M464 378L440 402L434 444L408 452L374 444L370 416L330 404M530 204L532 226L516 238L536 256L540 290L518 300L524 334M432 276L450 298L518 300M440 240L446 222L474 226L470 248L442 240M608 278L636 302L652 304L656 286L684 274L686 230L700 206M684 274L706 282L704 310L720 330L734 362L722 436M720 330L780 334L782 310M606 316L634 318L634 336L618 346L588 344L598 368L630 396L612 420L588 436L604 452L586 476M652 350L708 332M652 350L662 380L670 406L646 430L650 470M442 414L452 414L456 446L480 464L490 486M284 388L290 374L326 358M300 326L328 356M110 70L120 90M240 40L252 56" />
      </g>
    </g>
  </svg>
);

const navItems: [string, React.ReactNode][] = [
  ["Information", <Info s={25} />],
  ["Source", <Ic s={25}><circle cx="15" cy="13.500" r="7.500" fill="#6a93cc" stroke="#eee" strokeWidth="3" strokeDasharray="3 1.500" /><circle cx="15" cy="13.500" r="6" stroke="#ddd" strokeWidth="1.500" /><path d="M3 1.500C7 .5 10 3.500 9 7L14 12L12 14L7 9.500C3 10.500 1 8 .8 5.500L4 7.500L6 5.500Z" fill="#f2f2f2" stroke="#555" strokeWidth=".6" /><path d="M11 11L22.500 21.500" stroke="#4a3920" strokeWidth="5.500" /><path d="M11 11L22 21" stroke="#f3cf8a" strokeWidth="4" /></Ic>],
  ["Symbology", <Brush s={26} dim />],
  ["Labels", <LabelNav />],
  ["Masks", <Ic s={25}><text x="11.500" y="15" textAnchor="middle" fontSize="13" fontWeight="700" fill="#3a3a3a" stroke="#dfeaf6" strokeWidth="5" strokeLinejoin="round" paintOrder="stroke" fontFamily="Open Sans" letterSpacing="-.4">abc</text></Ic>],
  ["3D View", <Ic s={25}><path d="M12 0L22.500 6.500L12 13L1.500 6.500Z" fill="#f58a8a" stroke="#c61717" strokeWidth="1.500" /><path d="M1 8L11.500 14.500V24L1 18Z" fill="#8fdf3a" stroke="#4a9a10" strokeWidth="1.300" /><path d="M23 8L12.500 14.500V24L23 18Z" fill="#fbe54a" stroke="#c8a010" strokeWidth="1.300" /></Ic>],
  ["Diagrams", <Diagram s={25} />],
  ["Fields", <Ic s={25}><rect x="1" y="1.500" width="22" height="21.500" fill="#eef0f2" stroke="#7599c8" strokeWidth="1.500" /><rect x="1.500" y="2" width="21" height="5" fill="#a9c3e3" /><path d="M3 9.500h4M12 9.500h9M3 13h4M12 13h9M3 16.500h4M12 16.500h9M3 20h4M12 20h9" stroke="#5c7fb0" strokeWidth="1.300" /><rect x="5.500" y="0" width="6" height="25" fill="#f8f0a0" stroke="#f1dc4a" strokeWidth="1.300" /></Ic>],
  ["Attributes Form", <Ic s={25}><rect x="1" y="1" width="22" height="22" fill="#e6e9ed" stroke="#7f9fca" strokeWidth="1.500" /><path d="M4 7.500h5M4 17h5" stroke="#444" strokeWidth="1.700" /><rect x="10.500" y="4.500" width="10" height="6" fill="#fff" stroke="#6690c6" strokeWidth="1.300" /><rect x="10.500" y="14" width="10" height="6" fill="#fff" stroke="#6690c6" strokeWidth="1.300" /></Ic>],
  ["Joins", <Ic s={25}><circle cx="2.500" cy="12" r="2.800" fill="#6a93cc" stroke="#4d77b0" /><path d="M8 12L24.500 1V23Z" fill="#4b76b2" stroke="#3a619a" /><path d="M17 6.500V17.500L24 22V2Z" fill="#6a93cc" fillOpacity=".6" /></Ic>],
  ["Auxiliary Storage", <Ic s={25}><path d="M9 .5H19L24 5.500V23.500H9Z" fill="#fcfcfc" stroke="#ddd" /><path d="M19 .5V5.500H24Z" fill="#ccc" stroke="#555" strokeWidth=".8" /><path d="M.8 9.500V20.500Q8 25 15.200 20.500V9.500Z" fill="#9c9c9c" stroke="#555" /><ellipse cx="8" cy="9" rx="7.200" ry="2.800" fill="#d0d0d0" stroke="#666" /><path d="M.8 15Q8 19 15.200 15" stroke="#444" /><path d="M4 12v9" stroke="#ddd" strokeWidth="2" /></Ic>],
  ["Actions", <Ic s={25}><circle cx="15" cy="9.500" r="8.800" stroke="#f0f0f0" strokeWidth="2" strokeDasharray="4 2.900" /><circle cx="15" cy="9.500" r="7.300" fill="#5b87c5" stroke="#ececec" strokeWidth="2.500" /><path d="M12.500 5.500V13.500L19 9.500Z" fill="#fff" /><circle cx="4" cy="20" r="3.500" fill="#6a93cc" stroke="#a9c3e3" strokeWidth="1.300" strokeDasharray="2 1" /></Ic>],
];

const Btn = ({ children, cls }: Kids & { cls: string }) => (
  <div className={"flex h-[21px] shrink-0 items-center justify-center rounded-[3px] border bg-[linear-gradient(#fdfdfd_50%,#ededed)] " + cls}>{children}</div>
);

const SmallBtn = ({ children, off }: Kids & { off?: boolean }) => (
  <div className={"flex h-[24px] w-[28px] shrink-0 items-center justify-center rounded-[3px] border bg-[linear-gradient(#fdfdfd_70%,#ededed)] " + (off ? "border-[#d2d2d2]" : "border-[#ababab]")}>{children}</div>
);

const RuleRow = ({ c, label, rule, it }: { c: string; label: string; rule: string; it?: boolean }) => (
  <div className="flex h-[18px] items-center whitespace-nowrap">
    <div className="flex w-[149px] items-center pl-[23px]">
      <Check />
      <svg width="16" height="16" className="ml-[6px] mr-[6px] shrink-0"><rect x=".5" y=".5" width="15" height="15" fill={c} stroke="#b4b6ba" /></svg>
      <span className="pb-[2px]">{label}</span>
    </div>
    <span className={it ? "pb-[2px] pl-[4px] italic tracking-[0.1px]" : "pb-[2px] pl-[4px] tracking-[0.2px]"}>{rule}</span>
  </div>
);

const Dialog = () => (
  <div className="absolute left-[143px] top-[94px] flex h-[485px] w-[861px] flex-col border border-[#636363] bg-[#fbfbfb]">
    <div className="flex h-[30px] shrink-0 items-center pl-[8px] pr-[9px]">
      <Ic s={16}><circle cx="11.500" cy="11.500" r="9" stroke="#6ba02c" strokeWidth="4.500" /><path d="M11 10L16 11L22.500 19L19 23L11 16Z" fill="#8dbb38" /><path d="M10 10L16 10.500L15 16Z" fill="#ee7f22" /></Ic>
      <span className="ml-[5px] flex-1 tracking-[-0.06px]">Layer Properties — kihelkonnad3 — Symbology</span>
      <svg width="12" height="12"><path d="M1 1L11 11M11 1L1 11" stroke="#111" strokeWidth="1.100" /></svg>
    </div>
    <div className="flex min-h-0 flex-1">
      <div className="flex w-[312px] flex-col bg-[#5c5c5c]">
        <div className="flex h-[22px] shrink-0 items-center rounded-[2px] border border-[#3fa4f2] bg-[#fcfcfc] pl-[8px]">
          <svg width="13" height="13" viewBox="0 0 13 13" fill="none" stroke="#8a8a8a" strokeWidth="1.300"><circle cx="5" cy="5" r="4.200" /><path d="M8 8L12.500 12.500" /></svg>
        </div>
        <div className="mt-[5px] flex min-h-0 flex-1">
          <div className="flex w-[298px] flex-col overflow-hidden pt-px text-[#f4f4f4]">
            {navItems.map(([t, ic], i) => (
              <div key={t} className={i === 2 ? "flex h-[36px] shrink-0 items-center bg-[#fbfbfb] pl-[7px] text-black" : "flex h-[36px] shrink-0 items-center pl-[5px]"}>
                <div className={i === 2 ? "flex w-[26px] justify-center" : "-ml-px mr-px flex w-[25px] justify-center"}>{ic}</div>
                <span className="ml-[7px] tracking-[-0.08px]">{t}</span>
              </div>
            ))}
          </div>
          <div className="flex w-[14px] flex-col bg-[#fbfbfb]">
            <div className="flex h-[14px] items-center justify-center border-b border-[#d4d4d4]"><div className="rotate-180"><Down /></div></div>
            <div className="h-[207px] border-l border-[#dcdcdc]" />
            <div className="flex-1 border-t border-[#b0b0b0] bg-[#e8e8e8]" />
            <div className="flex h-[14px] items-center justify-center border-t border-[#c4c4c4]"><Down /></div>
          </div>
        </div>
      </div>
      <div className="flex w-[4px] items-center justify-center"><div className="mt-[2px] h-[17px] border-l border-dotted border-[#aaa]" /></div>
      <div className="flex w-[540px] flex-col pt-[3px]">
        <div className="flex h-[24px] shrink-0 items-center rounded-[3px] border border-[#ababab] bg-[linear-gradient(#fdfdfd_80%,#ececec)] pl-[6px] pr-[6px]">
          <svg width="15" height="15" viewBox="0 0 15 15"><path d="M1.500 4V12.500H4M1.500 7.500H4" stroke="#777" fill="none" /><rect x=".5" y=".8" width="10" height="3" fill="#ccc" stroke="#666" /><rect x="4" y="5.800" width="10" height="3" fill="#17b04f" stroke="#0c4a22" /><rect x="4" y="10.800" width="10" height="3" fill="#17b04f" stroke="#0c4a22" /></svg>
          <span className="ml-[2px] flex-1 pt-px tracking-[-0.35px]">Rule-based</span>
          <Down />
        </div>
        <div className="mt-[6px] flex h-[309px] shrink-0 flex-col border border-[#b4b4b4]">
          <div className="flex h-[19px] shrink-0 border-b border-[#b4b4b4] bg-[linear-gradient(#fbfbfb_65%,#ebebeb)] leading-[20px]">
            <div className="w-[150px] border-r border-[#cfcfcf] pl-[2px]">Label</div>
            <div className="w-[150px] border-r border-[#cfcfcf] pl-[2px]">Rule</div>
            <div className="w-[100px] border-r border-[#cfcfcf] pl-[2px] tracking-[0.05px]">Min. Scale</div>
            <div className="w-[100px] border-r border-[#cfcfcf] pl-[2px] tracking-[-0.05px]">Max. Scale</div>
            <div className="pl-[2px] tracking-[0px]">Count</div>
          </div>
          <div className="flex-1">
            <RuleRow c="#3e5693" label="suured erinev..." rule={'abs ("eiole" -\u00a0 "pole") >= ...'} />
            <RuleRow c="#a8acb8" label="väikesed erin..." rule="ELSE" it />
          </div>
          <div className="flex h-[14px] shrink-0 border-t border-[#cacaca]">
            <div className="flex w-[14px] items-center justify-center border-r border-[#cacaca]"><div className="rotate-90"><Down /></div></div>
            <div className="w-[388px] border-r border-[#b0b0b0]" />
            <div className="flex-1 bg-[#e8e8e8]" />
            <div className="flex w-[15px] items-center justify-center border-l border-[#cacaca]"><div className="-rotate-90"><Down /></div></div>
          </div>
        </div>
        <div className="mt-[6px] flex shrink-0 items-center gap-[6px]">
          <SmallBtn><svg width="14" height="14"><path d="M4.500 .5H9.500V4.500H13.500V9.500H9.500V13.500H4.500V9.500H.5V4.500H4.500Z" fill="#e9f3e9" stroke="#4b8a55" /><path d="M7 3V11M3 7H11" stroke="#4b8a55" strokeWidth="2" /></svg></SmallBtn>
          <SmallBtn off><svg width="14" height="6"><rect x=".5" y=".5" width="13" height="5" fill="#f8e4e4" stroke="#d5c4c4" /><path d="M3 3h8" stroke="#ecd2d2" strokeWidth="1.500" /></svg></SmallBtn>
          <SmallBtn off><Ic s={16} dim><path d="M3 2H14L18 6V22H3Z" fill="#eee" stroke="#999" /><path d="M7 20L19 3L23 6L11 21Z" fill="#d8d080" stroke="#999" /></Ic></SmallBtn>
          <SmallBtn><Sigma s={16} /></SmallBtn>
          <div className="flex-1" />
          <Btn cls="w-[84px] border-[#ababab] tracking-[-0.4px] whitespace-nowrap">Symbol Levels...</Btn>
        </div>
        <div className="mt-[6px] flex shrink-0">
          <Btn cls="w-[124px] gap-[6px] border-[#c4c4c4] text-[#8a8a8a] tracking-[-0.35px] whitespace-nowrap">Refine Selected Rules<span className="opacity-50"><svg width="7" height="4"><path d="M0 0H7L3.500 4Z" fill="#555" /></svg></span></Btn>
        </div>
        <div className="mt-[5px] flex h-[19px] shrink-0 items-center pl-[4px]">
          <svg width="8" height="12"><path d="M1 1V11L7.300 6Z" fill="#555" stroke="#000" /></svg>
          <span className="ml-[9px] pb-px font-bold tracking-[-0.05px]">Layer Rendering</span>
        </div>
        <div className="mt-[6px] flex shrink-0 gap-[6px]">
          <Btn cls="w-[80px] gap-[23px] border-[#ababab] pl-[16px]"><span>Style</span><svg width="7" height="4"><path d="M0 0H7L3.500 4Z" fill="#555" /></svg></Btn>
          <div className="flex-1" />
          <Btn cls="w-[80px] border-[#3fa4f2] pr-px">OK</Btn>
          <Btn cls="w-[80px] border-[#ababab] pr-[2px]">Cancel</Btn>
          <Btn cls="w-[80px] border-[#ababab] pr-[2px]">Apply</Btn>
          <Btn cls="w-[80px] border-[#ababab] pr-[2px]">Help</Btn>
        </div>
      </div>
    </div>
    <svg width="12" height="19" className="absolute left-[394px] top-[94px] overflow-visible"><path d="M.5 .5V16.500L4 13L6.500 18L9 17L6.700 12H11.500Z" fill="#fff" stroke="#222" strokeWidth=".9" /></svg>
  </div>
);

const bandBg = "bg-[linear-gradient(to_right,transparent_126px,#e9e9e9_126px)]";

const Slot = ({ children }: Kids) => <div className="flex w-[25px] shrink-0 items-center justify-center">{children}</div>;

export default function App() {
  return (
    <div className="relative flex h-[790px] w-[1007px] flex-col overflow-hidden bg-[#fbfbfb] font-['Open_Sans','Noto_Sans',sans-serif] text-[11.5px] leading-[16px] tracking-[-0.17px] text-black">
      <div className="flex h-[4px] shrink-0 border-b border-[#c4c4c4]">
        <svg width="1007" height="2"><path d="M23 .5h3M142 .5h3M203 .5h4M247 .5h3M567 .5h4M607 .5h2" stroke="#aaa" /></svg>
      </div>
      <div className="flex h-[39px] shrink-0 items-center border-b border-[#b8b8b8]">
        <div className="w-[8px] shrink-0 pl-px"><Grip /></div>
        <Cell><NewFile /></Cell><Cell><Folder /></Cell><Cell><Floppy /></Cell><Cell><NewLayout /></Cell><Cell><LayoutMgr /></Cell><Cell><StyleMgr /></Cell>
        <div className="flex w-[16px] shrink-0 justify-end pr-[2px]"><Grip /></div>
        <Cell on><Hand /></Cell><Cell><PanSel /></Cell><Cell><ZoomIn /></Cell><Cell><ZoomOut /></Cell><Cell><ZoomFull /></Cell><Cell><ZoomSel /></Cell><Cell><ZoomLayer /></Cell><Cell><ZoomNative /></Cell><Cell><ZoomLast /></Cell><Cell><ZoomNext /></Cell><Cell><MapView /></Cell><Cell><View3D /></Cell><Cell><Bookmark /></Cell><Cell><Book /></Cell><Cell><Clock /></Cell><Cell><Refresh /></Cell>
        <GripCell />
        <Cell><Info cursor /></Cell><Cell><Abacus /></Cell><Cell><Gear /></Cell><Cell><Sigma /></Cell><Cell><Table /></Cell><DownCell /><Cell><Ruler /></Cell><DownCell /><Cell><Tip /></Cell>
      </div>
      <div className="flex h-[39px] shrink-0 items-center border-b border-[#b8b8b8]">
        <div className="w-[8px] shrink-0 pl-px"><Grip /></div>
        <Cell><DataSource /></Cell><Cell><GeoPkg /></Cell><Cell><VNew /></Cell><Cell><Feather /></Cell><Cell><Chip /></Cell>
        <SepCell />
        <Cell><VMesh /></Cell>
        <SepCell />
        <div className="flex w-[16px] shrink-0 justify-end pr-px"><Grip /></div>
        <Cell><Edits /></Cell><Cell><Pencil /></Cell><Cell><Floppy dim /></Cell><Cell><AddFeat /></Cell><Cell><Vertex /></Cell><DownCell />
        <Cell><EditAttr /></Cell><Cell><Trash /></Cell><Cell><Cut /></Cell><Cell><Copy /></Cell><Cell><Paste /></Cell><Cell><Undo /></Cell><Cell><Redo /></Cell>
        <div className="flex w-[15px] shrink-0 justify-end"><Grip /></div>
        <Cell><LabelY /></Cell><Cell><Diagram /></Cell>
        <SepCell />
        <Cell><LabelPin /></Cell><Cell><LabelRed /></Cell>
        <div className="w-px shrink-0" />
        <SepCell />
        <Cell><LabelDim k={0} /></Cell><Cell><LabelDim k={1} /></Cell><Cell><LabelDim k={2} /></Cell><Cell><LabelDim k={3} /></Cell><Cell><LabelDim k={4} /></Cell>
        <div className="flex w-[13px] shrink-0 justify-end"><Grip /></div>
        <Cell><Globe /></Cell>
      </div>
      <div className="flex h-[38px] shrink-0 items-center border-b border-[#b8b8b8]">
        <div className="w-[8px] shrink-0 pl-px"><Grip /></div>
        <Cell><SelectIc /></Cell><DownCell /><Cell><SelExpr /></Cell><DownCell /><Cell><Desel /></Cell><DownCell />
        <Cell><Ic><rect x="5" y="2" width="13" height="12" fill="#fbe24a" stroke="#c8a818" /></Ic></Cell>
      </div>
      <div className="flex min-h-0 flex-1">
        <div className="flex w-[254px] shrink-0 flex-col overflow-hidden border-r border-[#c8c8c8]">
          <div className={"shrink-0 border-b border-[#b8b8b8] " + bandBg}>
            <div className="flex h-[22px] items-center">Browser</div>
            <div className="mb-[2px] flex h-[27px] items-center">
              <Slot><AddLayer /></Slot><Slot><Refresh s={16} /></Slot><Slot><Filter /></Slot><Slot><Collapse /></Slot><Slot><Info s={15} /></Slot>
            </div>
          </div>
          <div className="flex h-[103px] shrink-0 flex-col overflow-hidden border-b border-[#b8b8b8] pt-px">
            {browserRows.map(([t, ic, ex]) => (
              <div key={t} className="flex h-[18px] shrink-0 items-center">
                <div className="w-[16px]">{ex && <Tri />}</div>
                <div className="flex w-[16px] justify-center">{ic}</div>
                <span className="ml-[6px] whitespace-nowrap tracking-[-0.13px]">{t}</span>
              </div>
            ))}
          </div>
          <div className={"shrink-0 border-b border-[#b8b8b8] " + bandBg}>
            <div className="flex h-[5px] items-center pl-[118px]"><div className="w-[17px] border-t border-dotted border-[#999]" /></div>
            <div className="flex h-[22px] items-center">Layers</div>
            <div className="mb-[2px] flex h-[27px] items-center">
              <Slot><Brush /></Slot><Slot><AddGroup /></Slot><Slot><Eye /></Slot><Slot><Filter /></Slot><Slot><EpsF /></Slot><Down />
            </div>
          </div>
          <LayerTree />
        </div>
        <div className="flex w-[7px] shrink-0 border-r border-[#b0b0b0]" />
        <div className="flex flex-1 items-end"><MapCanvas /></div>
      </div>
      <div className="absolute left-[137px] top-[86px] h-[504px] w-[880px] rounded-[14px] bg-black/8" />
      <div className="absolute left-[139px] top-[91px] h-[493px] w-[872px] rounded-[6px] bg-black/10" />
      <Dialog />
    </div>
  );
}
